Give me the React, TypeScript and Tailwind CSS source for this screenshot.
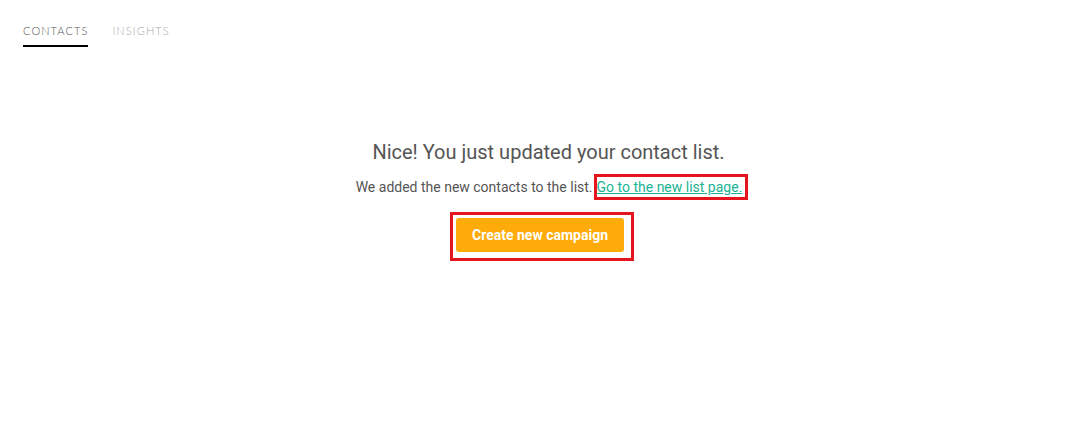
import React from "react";

export default function App() {
  return (
    <div className="w-[1086px] h-[421px] bg-white" style={{ fontFamily: "Roboto, 'Liberation Sans', sans-serif" }}>
      <div className="flex gap-[24px] pl-[23px] pt-[23px]" style={{ fontFamily: "Lato, 'Open Sans', sans-serif" }}>
        <div className="flex flex-col">
          <span className="text-[11px] font-light tracking-[1.1px] leading-[16px] text-[#555]">CONTACTS</span>
          <span className="mt-[6px] h-[2px] bg-black"></span>
        </div>
        <div className="flex flex-col">
          <span className="text-[11px] font-light tracking-[1.1px] leading-[16px] text-[#a8a8a8]">INSIGHTS</span>
        </div>
      </div>
      <div className="flex flex-col items-center pt-[93px]">
        <h1 className="text-[20px] leading-[24px] text-[#555] pl-[11px]">Nice! You just updated your contact list.</h1>
        <p className="mt-[10px] text-[14px] leading-[20px] text-[#555] flex items-center pl-[18px]">
          <span>We added the new contacts to the list.</span>
          <span className="ml-[1px] border-[3px] border-[#e5141d] pr-[3px] leading-[20px]">
            <a href="#" className="text-[#1ab394] underline">Go to the new list page.</a>
          </span>
        </p>
        <div className="mt-[12px] mr-[2px] border-[3px] border-[#e5141d] pt-[3px] pl-[3px] pr-[7px] pb-[6px]">
          <button className="block w-[168px] h-[34px] rounded-[3px] bg-[#ffab0a] text-white text-[14px] font-bold">
            Create new campaign
          </button>
        </div>
      </div>
    </div>
  );
}
